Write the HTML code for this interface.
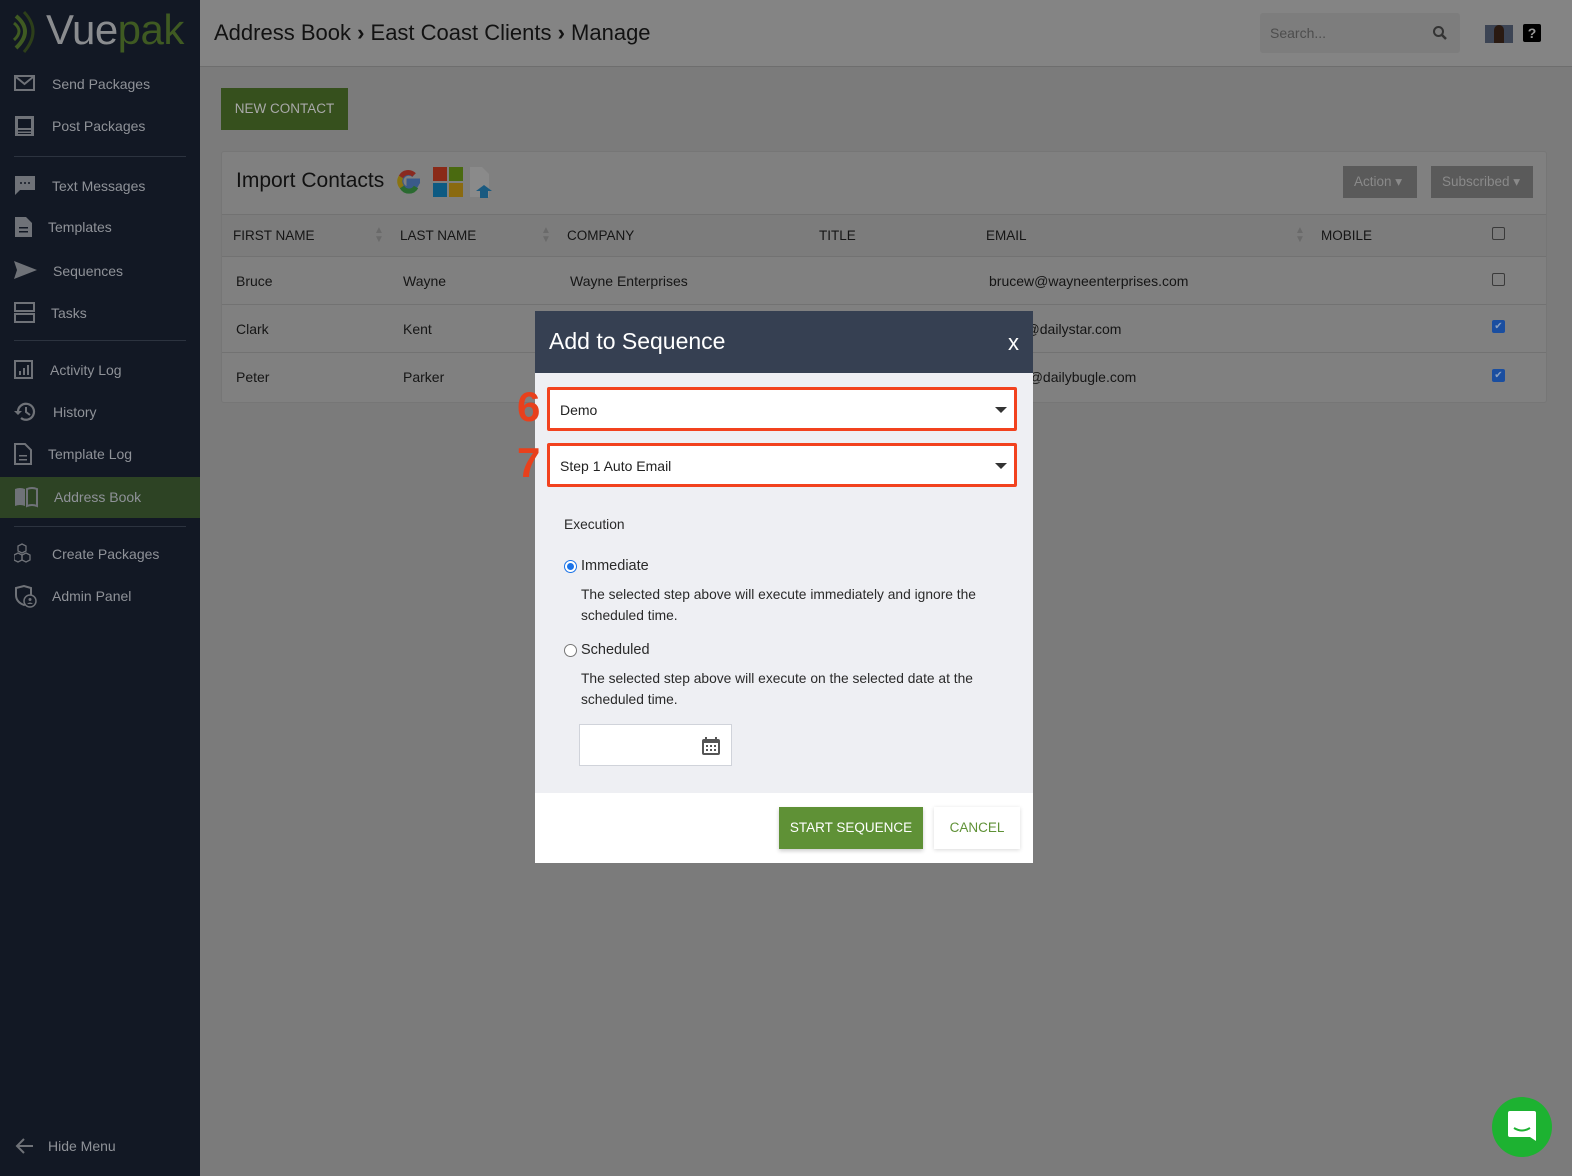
<!DOCTYPE html>
<html><head><meta charset="utf-8"><style>
*{box-sizing:border-box;margin:0;padding:0}
body{width:1572px;height:1176px;position:relative;overflow:hidden;background:#7b7b7b;font-family:"Liberation Sans",sans-serif;color:#111}
.sb{position:absolute;left:0;top:0;width:200px;height:1176px;background:#121824}
.logo{position:absolute;left:12px;top:6px;font-size:42px;letter-spacing:-0.5px}
.logo .v{color:#8a8c8f}.logo .p{color:#3f5a22}
.it{position:absolute;left:0;width:200px;height:40px;color:#8f9298;font-size:14px}
.it span{position:absolute;top:12px}
.it svg{position:absolute;left:14px;top:9px}
.hr{position:absolute;left:14px;width:172px;height:1px;background:#2c333f}
.hdr{position:absolute;left:200px;top:0;width:1372px;height:67px;background:#848484;border-bottom:1px solid #6e6e6e}
.crumb{position:absolute;left:14px;top:20px;font-size:22px;color:#121212}
.search{position:absolute;left:1060px;top:13px;width:200px;height:40px;background:#7d7d7d;border-radius:3px;color:#4d4d4d;font-size:14px;padding:12px 10px}
.btn{position:absolute;background:#36501d;color:#a9a9a9;font-size:13.5px;text-align:center}
.card{position:absolute;left:221px;top:151px;width:1326px;height:252px;background:#808080;border:1px solid #767676;border-radius:3px}
.th{position:absolute;top:62px;left:0;width:1324px;height:43px;background:#7c7c7c;border-top:1px solid #727272;border-bottom:1px solid #727272}
.row{position:absolute;left:0;width:1324px;height:48px;border-bottom:1px solid #727272}
.c{position:absolute;font-size:14px;color:#151515}
.hc{position:absolute;top:13px;font-size:13.5px;color:#151515}
.cb{position:absolute;width:13px;height:13px;border:1.5px solid #3a3a3a;border-radius:2px}
.cbk{position:absolute;width:13px;height:13px;background:#1a4ea0;border-radius:2px;color:#8aa0c0;font-size:10px;line-height:13px;text-align:center}
.dd{position:absolute;top:14px;height:32px;background:#5a5a5a;color:#8a8a8a;font-size:13.5px;padding:8px 11px}
.modal{position:absolute;left:535px;top:311px;width:498px;height:552px;background:#eeeff3}
.mh{height:62px;background:#364052;color:#fff;font-size:23px;padding:17px 14px}
.sel{position:absolute;left:12px;width:470px;height:44px;background:#fff;border:3px solid #f2421e;border-radius:2px;font-size:14px;padding:12px 10px;color:#222}
.arr{position:absolute;right:7px;top:17px;width:0;height:0;border-left:6px solid transparent;border-right:6px solid transparent;border-top:6px solid #333}
.num{position:absolute;left:-33px;color:#e8401c;font-size:42px;font-weight:bold}
.mt{position:absolute;color:#2a2a2a;font-size:13.8px;line-height:21px}
.radio{position:absolute;width:13px;height:13px;border-radius:50%;border:1px solid #777;background:#fff}
.foot{position:absolute;left:0;top:482px;width:498px;height:70px;background:#fff}
</style></head><body>
<div class="sb">
<div class="logo"><svg width="30" height="46" viewBox="0 0 30 46" style="position:absolute;left:0;top:2px"><path d="M4 8 Q22 23 4 40" stroke="#3f5a22" stroke-width="4" fill="none"/><path d="M2 15 Q12 23 2 32" stroke="#3f5a22" stroke-width="3" fill="none"/><path d="M12 4 Q30 23 12 44" stroke="#2d3f1a" stroke-width="3" fill="none"/></svg><span style="margin-left:34px" class="v">Vue</span><span class="p">pak</span></div>
<div class="it" style="top:64px"><svg width="22" height="20"><rect x="1" y="3" width="19" height="14" fill="none" stroke="#6f7278" stroke-width="2"/><path d="M2 4 L10.5 11 L19 4" fill="none" stroke="#6f7278" stroke-width="2"/></svg><span style="left:52px">Send Packages</span></div>
<div class="it" style="top:106px"><svg width="22" height="22"><rect x="1" y="1" width="19" height="20" fill="#6f7278"/><rect x="4" y="4" width="13" height="9" fill="#121824"/><rect x="4" y="15" width="13" height="1.5" fill="#121824"/><rect x="4" y="18" width="13" height="1" fill="#121824"/></svg><span style="left:52px">Post Packages</span></div>
<div class="hr" style="top:156px"></div>
<div class="it" style="top:166px"><svg width="22" height="22"><path d="M1 1 H21 V15 H6 L1 20 Z" fill="#6f7278"/><circle cx="7" cy="8" r="1" fill="#121824"/><circle cx="11" cy="8" r="1" fill="#121824"/><circle cx="15" cy="8" r="1" fill="#121824"/></svg><span style="left:52px">Text Messages</span></div>
<div class="it" style="top:207px"><svg width="22" height="22"><path d="M1 1 H12 L18 7 V21 H1 Z" fill="#6f7278"/><rect x="5" y="11" width="9" height="1.5" fill="#121824"/><rect x="5" y="15" width="9" height="1.5" fill="#121824"/></svg><span style="left:48px">Templates</span></div>
<div class="it" style="top:251px"><svg width="24" height="22"><path d="M0 1 L23 10 L0 19 L3 10 Z" fill="#6f7278"/></svg><span style="left:53px">Sequences</span></div>
<div class="it" style="top:293px"><svg width="22" height="22"><rect x="1" y="1" width="19" height="8" fill="none" stroke="#6f7278" stroke-width="2"/><rect x="1" y="12" width="19" height="8" fill="none" stroke="#6f7278" stroke-width="2"/></svg><span style="left:51px">Tasks</span></div>
<div class="hr" style="top:340px"></div>
<div class="it" style="top:350px"><svg width="22" height="22"><rect x="1" y="2" width="17" height="17" fill="none" stroke="#6f7278" stroke-width="2"/><rect x="5" y="12" width="2" height="4" fill="#6f7278"/><rect x="9" y="9" width="2" height="7" fill="#6f7278"/><rect x="13" y="6" width="2" height="10" fill="#6f7278"/></svg><span style="left:50px">Activity Log</span></div>
<div class="it" style="top:392px"><svg width="24" height="22"><path d="M4 11 A8 8 0 1 1 7 17" fill="none" stroke="#6f7278" stroke-width="2.2"/><path d="M0 10 L4 14 L8 10 Z" fill="#6f7278"/><path d="M12 6 V11 L16 14" fill="none" stroke="#6f7278" stroke-width="2"/></svg><span style="left:53px">History</span></div>
<div class="it" style="top:434px"><svg width="22" height="22"><path d="M1 1 H11 L17 7 V21 H1 Z" fill="none" stroke="#6f7278" stroke-width="2"/><rect x="5" y="12" width="8" height="1.5" fill="#6f7278"/><rect x="5" y="16" width="8" height="1.5" fill="#6f7278"/></svg><span style="left:48px">Template Log</span></div>
<div class="it" style="top:477px;height:41px;background:#2d4324"><svg width="24" height="22"><path d="M1 3 Q6 1 11 3 V20 Q6 18 1 20 Z" fill="#6f7278"/><path d="M13 3 Q18 1 23 3 V20 Q18 18 13 20 Z" fill="none" stroke="#6f7278" stroke-width="2"/></svg><span style="left:54px">Address Book</span></div>
<div class="hr" style="top:526px"></div>
<div class="it" style="top:534px"><svg width="24" height="22"><g fill="none" stroke="#6f7278" stroke-width="1.3"><path d="M8 1 L12 3 L12 8 L8 10 L4 8 L4 3 Z"/><path d="M4 10 L8 12 L8 17 L4 19 L0 17 L0 12 Z"/><path d="M12 10 L16 12 L16 17 L12 19 L8 17 L8 12 Z"/></g></svg><span style="left:52px">Create Packages</span></div>
<div class="it" style="top:576px"><svg width="24" height="24"><path d="M2 3 L10 1 L17 3 V10 Q17 17 10 20 Q2 17 2 10 Z" fill="none" stroke="#6f7278" stroke-width="2"/><circle cx="16" cy="16" r="6" fill="#121824" stroke="#6f7278" stroke-width="1.5"/><circle cx="16" cy="14.5" r="1.5" fill="#6f7278"/><path d="M13 19 Q16 16 19 19" fill="#6f7278"/></svg><span style="left:52px">Admin Panel</span></div>
<div class="it" style="top:1126px"><svg width="22" height="22"><path d="M19 11 H3 M10 4 L3 11 L10 18" fill="none" stroke="#6f7278" stroke-width="2"/></svg><span style="left:48px">Hide Menu</span></div>
</div>
<div class="hdr"><div class="crumb">Address Book <b style="font-size:22px">›</b> East Coast Clients <b style="font-size:22px">›</b> Manage</div>
<div class="search">Search...<svg width="16" height="16" style="position:absolute;right:12px;top:12px"><circle cx="6.5" cy="6.5" r="4.5" fill="none" stroke="#333" stroke-width="2"/><path d="M10 10 L14 14" stroke="#333" stroke-width="2.5"/></svg></div>
<div style="position:absolute;left:1285px;top:25px;width:28px;height:18px;background:#3c4454"><div style="position:absolute;left:9px;top:0;width:10px;height:18px;background:#2a1a12;border-radius:5px 5px 0 0"></div></div>
<div style="position:absolute;left:1323px;top:24px;width:18px;height:18px;background:#000;border-radius:2px;color:#999;font-size:14px;font-weight:bold;text-align:center;line-height:18px">?</div>
</div>
<div class="btn" style="left:221px;top:88px;width:127px;height:42px;line-height:42px">NEW CONTACT</div>
<div class="card">
<div style="position:absolute;left:14px;top:17px;font-size:21px;color:#111">Import Contacts</div>
<svg width="110" height="36" viewBox="0 0 110 36" style="position:absolute;left:170px;top:11px"><path d="M28 18 H17 V22 H24 A8 8 0 1 1 22 12" fill="none" stroke="#3a5a8a" stroke-width="5"/><path d="M22 12 A8 8 0 0 0 9 14" fill="none" stroke="#8a2a20" stroke-width="5"/><path d="M9 14 A8 8 0 0 0 10 24" fill="none" stroke="#8a7410" stroke-width="5"/><path d="M10 24 A8 8 0 0 0 24 24" fill="none" stroke="#2a6a30" stroke-width="5"/><rect x="41" y="4" width="14" height="14" fill="#8a2a18"/><rect x="57" y="4" width="14" height="14" fill="#4a6a10"/><rect x="41" y="20" width="14" height="14" fill="#0d5a82"/><rect x="57" y="20" width="14" height="14" fill="#8a6a10"/><path d="M78 4 H90 L97 11 V34 H78 Z" fill="#8a8a8a"/><path d="M92 22 L100 28 H96 V35 H88 V28 H84 Z" fill="#1a5a80"/></svg>
<div class="dd" style="left:1121px;width:74px">Action ▾</div>
<div class="dd" style="left:1209px;width:102px">Subscribed ▾</div>
<div class="th">
<div class="hc" style="left:11px">FIRST NAME</div><div class="hc" style="left:178px">LAST NAME</div><div class="hc" style="left:345px">COMPANY</div><div class="hc" style="left:597px">TITLE</div><div class="hc" style="left:764px">EMAIL</div><div class="hc" style="left:1099px">MOBILE</div>
<div class="hc" style="left:152px;color:#6a6a6a;font-size:10px;top:11px;line-height:9px">▲<br>▼</div><div class="hc" style="left:319px;color:#6a6a6a;font-size:10px;top:11px;line-height:9px">▲<br>▼</div><div class="hc" style="left:1073px;color:#6a6a6a;font-size:10px;top:11px;line-height:9px">▲<br>▼</div>
<div class="cb" style="left:1270px;top:12px"></div>
</div>
<div class="row" style="top:105px"><div class="c" style="left:14px;top:16px">Bruce</div><div class="c" style="left:181px;top:16px">Wayne</div><div class="c" style="left:348px;top:16px">Wayne Enterprises</div><div class="c" style="left:767px;top:16px">brucew@wayneenterprises.com</div><div class="cb" style="left:1270px;top:16px"></div></div>
<div class="row" style="top:153px"><div class="c" style="left:14px;top:16px">Clark</div><div class="c" style="left:181px;top:16px">Kent</div><div class="c" style="left:767px;top:16px">clarkk@dailystar.com</div><div class="cbk" style="left:1270px;top:15px">✔</div></div>
<div class="row" style="top:201px;border:none"><div class="c" style="left:14px;top:16px">Peter</div><div class="c" style="left:181px;top:16px">Parker</div><div class="c" style="left:767px;top:16px">peterp@dailybugle.com</div><div class="cbk" style="left:1270px;top:16px">✔</div></div>
</div>
<div class="modal">
<div class="mh">Add to Sequence<span style="position:absolute;right:14px;top:19px;font-size:22px">x</span></div>
<div class="sel" style="top:76px"><span class="num" style="top:-7px">6</span>Demo<div class="arr"></div></div>
<div class="sel" style="top:132px"><span class="num" style="top:-7px">7</span>Step 1 Auto Email<div class="arr"></div></div>
<div class="mt" style="left:29px;top:203px">Execution</div>
<div class="radio" style="left:29px;top:249px;border:1.5px solid #1a73e8"><div style="position:absolute;left:2px;top:2px;width:7px;height:7px;border-radius:50%;background:#1a73e8"></div></div>
<div class="mt" style="left:46px;top:245px;font-size:14.5px">Immediate</div>
<div class="mt" style="left:46px;top:273px">The selected step above will execute immediately and ignore the<br>scheduled time.</div>
<div class="radio" style="left:29px;top:333px"></div>
<div class="mt" style="left:46px;top:329px;font-size:14.5px">Scheduled</div>
<div class="mt" style="left:46px;top:357px">The selected step above will execute on the selected date at the<br>scheduled time.</div>
<div style="position:absolute;left:44px;top:413px;width:153px;height:42px;background:#fff;border:1px solid #d0d3da"><svg width="18" height="18" style="position:absolute;right:11px;top:12px"><rect x="0" y="2" width="18" height="16" rx="2" fill="#555"/><rect x="2" y="6" width="14" height="10" fill="#fff"/><g fill="#555"><rect x="4" y="8" width="2" height="2"/><rect x="8" y="8" width="2" height="2"/><rect x="12" y="8" width="2" height="2"/><rect x="4" y="12" width="2" height="2"/><rect x="8" y="12" width="2" height="2"/><rect x="12" y="12" width="2" height="2"/></g><rect x="3" y="0" width="2" height="4" fill="#555"/><rect x="13" y="0" width="2" height="4" fill="#555"/></svg></div>
<div class="foot">
<div class="btn" style="left:244px;top:14px;width:144px;height:42px;line-height:42px;background:#5f9136;color:#fff;box-shadow:0 2px 4px rgba(0,0,0,.2)">START SEQUENCE</div>
<div class="btn" style="left:399px;top:14px;width:86px;height:42px;line-height:42px;background:#fff;color:#5f9136;box-shadow:0 1px 4px rgba(0,0,0,.15)">CANCEL</div>
</div>
</div>
<div style="position:absolute;left:1492px;top:1097px;width:60px;height:60px;border-radius:50%;background:#1db231"><svg width="28" height="30" style="position:absolute;left:16px;top:14px"><path d="M2 0 H26 Q28 0 28 2 V30 L22 26 H2 Q0 26 0 24 V2 Q0 0 2 0Z" fill="#fff"/><path d="M6 17 Q14 22 22 17" fill="none" stroke="#1db231" stroke-width="2"/></svg></div>
</body></html>
